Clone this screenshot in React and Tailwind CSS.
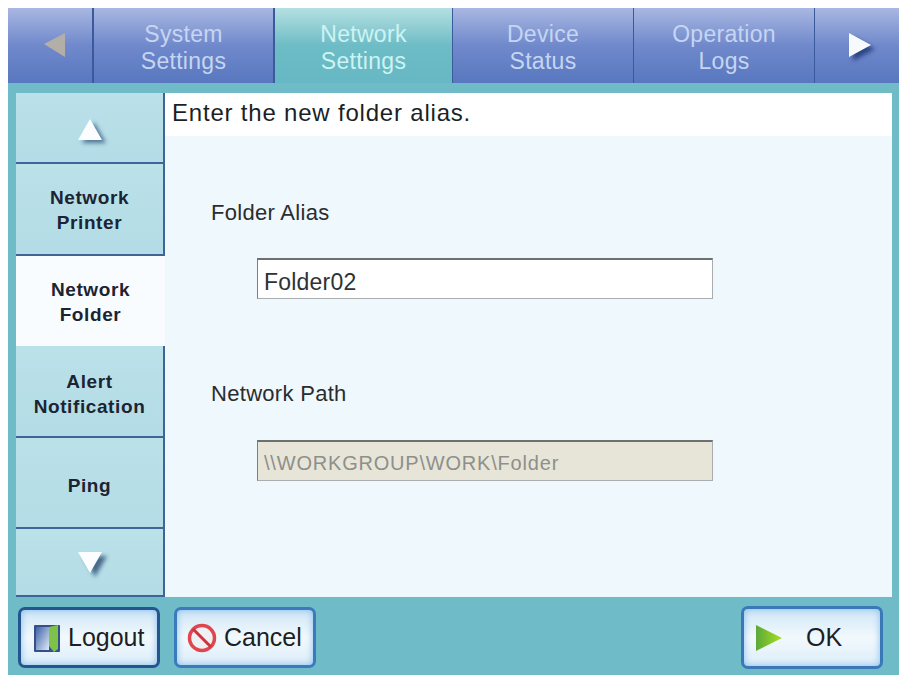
const font = { sans: 'font-["Liberation_Sans",Arial,sans-serif]' }

function Tab({ children, active }) {
  return (
    <div
      className={
        'flex flex-col items-center justify-center text-[23px] leading-[27px] tracking-[0.3px] pt-[4px] ' +
        (active
          ? 'bg-gradient-to-b from-[#b4e0e2] via-[#6dbcc6] to-[#66b8c4] text-[#cdf3f3]'
          : 'bg-gradient-to-b from-[#a9b7e2] via-[#7089cb] to-[#5877bf] text-[#c6d5f2]')
      }
    >
      {children}
    </div>
  )
}

function SideItem({ children, active, h }) {
  return (
    <div
      className={
        'flex flex-col items-center justify-center font-bold text-[19px] tracking-[0.6px] leading-[25px] text-[#1c2433] border-[#3f6596] ' +
        h +
        (active ? ' bg-[#f8fcfe]' : ' bg-gradient-to-b from-[#bbe1e9] to-[#b3dce6] border-b-2 border-r-2')
      }
    >
      {children}
    </div>
  )
}

function Btn({ children, className }) {
  return (
    <div
      className={
        'flex items-center rounded-[7px] border-[3px] bg-gradient-to-b from-[#cfe6f6] via-[#f2f9fd] to-[#dcedf9] shadow-[inset_0_0_7px_#86bdea] text-[25px] text-[#1c1f24] ' +
        className
      }
    >
      {children}
    </div>
  )
}

export default function App() {
  return (
    <div className={'w-[901px] h-[676px] bg-white pt-2 pl-2 overflow-hidden ' + font.sans}>
      <div className="w-[891px] h-[667px] bg-[#6fbbc7] flex flex-col">
        <div className="grid grid-cols-[84px_2px_179px_2px_177px_1px_180px_1px_180px_1px_84px] h-[75px] bg-[#3a5a9c]">
          <Tab>
            <svg width="26" height="26" viewBox="0 0 26 26" className="blur-[0.6px] mb-[6px] ml-[10px]">
              <path d="M23 1 L23 25 L2 12 Z" fill="#b3aea8" />
            </svg>
          </Tab>
          <div />
          <Tab>
            <span>System</span>
            <span>Settings</span>
          </Tab>
          <div />
          <Tab active>
            <span>Network</span>
            <span>Settings</span>
          </Tab>
          <div />
          <Tab>
            <span>Device</span>
            <span>Status</span>
          </Tab>
          <div />
          <Tab>
            <span>Operation</span>
            <span>Logs</span>
          </Tab>
          <div />
          <Tab>
            <svg width="24" height="26" viewBox="0 0 24 26" className="drop-shadow-[4px_4px_2px_#2c4585] mb-[6px] ml-[5px]">
              <path d="M1 1 L1 25 L23 13 Z" fill="#f6fafd" />
            </svg>
          </Tab>
        </div>
        <div className="h-[10px] shrink-0" />
        <div className="flex h-[504px] pl-2 pr-[7px]">
          <div className="w-[149px] flex flex-col shrink-0">
            <SideItem h="h-[71px]">
              <svg width="26" height="24" viewBox="0 0 26 24" className="mt-[4px] drop-shadow-[4px_3px_2px_#4f7596]">
                <path d="M1 22 L13 1 L25 22 Z" fill="#fbfdfe" />
              </svg>
            </SideItem>
            <SideItem h="h-[92px] pt-[2px]">
              <span>Network</span>
              <span>Printer</span>
            </SideItem>
            <SideItem h="h-[90px] pt-[2px]" active>
              <span>Network</span>
              <span>Folder</span>
            </SideItem>
            <SideItem h="h-[92px] pt-[5px]">
              <span>Alert</span>
              <span>Notification</span>
            </SideItem>
            <SideItem h="h-[91px] pt-[6px]">
              <span>Ping</span>
            </SideItem>
            <SideItem h="h-[68px]">
              <svg width="26" height="24" viewBox="0 0 26 24" className="drop-shadow-[5px_4px_2px_#47698a]">
                <path d="M1 2 L25 2 L13 23 Z" fill="#fbfdfe" />
              </svg>
            </SideItem>
          </div>
          <div className="flex-1 bg-[#eff8fc] min-w-0">
            <div className="h-[43px] bg-white pl-[7px] pt-[4px] text-[24px] leading-[32px] text-[#1c1f24] tracking-[0.8px]">
              Enter the new folder alias.
            </div>
            <div className="pl-[46px]">
              <div className="mt-[64px] text-[22px] tracking-[0.3px] leading-[26px] text-[#2a2d30]">Folder Alias</div>
              <div className="ml-[46px] mt-[32px] w-[456px] h-[41px] bg-white border-t-2 border-l border-b border-r border-t-[#6c706e] border-l-[#7a7e7c] border-b-[#a9adad] border-r-[#a9adad] pl-[6px] pt-[3px] text-[23px] tracking-[0.2px] leading-[39px] text-[#2f3235]">
                Folder02
              </div>
              <div className="mt-[82px] text-[22px] tracking-[0.3px] leading-[26px] text-[#2a2d30]">Network Path</div>
              <div className="ml-[46px] mt-[33px] w-[456px] h-[41px] bg-[#e7e5d8] border-t-2 border-l border-b border-r border-t-[#6c706e] border-l-[#7a7e7c] border-b-[#a9adad] border-r-[#a9adad] pl-[6px] pt-[1px] text-[20px] tracking-[0.8px] leading-[40px] text-[#8e8f8a]">
                {'\\\\WORKGROUP\\WORK\\Folder'}
              </div>
            </div>
          </div>
        </div>
        <div className="relative flex-1 flex items-start pl-[10px] pr-4 pt-[10px]">
          <Btn className="w-[142px] h-[61px] pl-[11px] border-[#24558f]">
            <svg width="30" height="32" viewBox="0 0 30 32" className="mr-[6px] shrink-0">
              <defs>
                <linearGradient id="lg" x1="0" y1="0" x2="1" y2="1">
                  <stop offset="0" stopColor="#3f63a8" />
                  <stop offset="1" stopColor="#dfe9f6" />
                </linearGradient>
              </defs>
              <rect x="2" y="3" width="26" height="27" rx="1" fill="#34508a" />
              <rect x="4" y="5" width="13" height="23" fill="url(#lg)" />
              <path d="M17 5 L26 3 L26 27 L22 30 L17 24 Z" fill="#7fc24a" />
            </svg>
            Logout
          </Btn>
          <Btn className="w-[142px] h-[61px] ml-[14px] pl-[9px] border-[#3a7abd]">
            <svg width="32" height="32" viewBox="0 0 32 32" className="mr-[6px] shrink-0">
              <circle cx="16" cy="16" r="12.5" fill="#eef0f4" stroke="#e0464e" strokeWidth="3.5" />
              <path d="M7 7 L25 25" stroke="#cf343c" strokeWidth="3" />
            </svg>
            Cancel
          </Btn>
          <Btn className="w-[142px] h-[63px] ml-auto -mt-px pl-[11px] gap-[23px] border-[#3a78b8]">
            <svg width="28" height="28" viewBox="0 0 28 28" className="shrink-0">
              <defs>
                <linearGradient id="okg" x1="0" y1="0" x2="1" y2="0">
                  <stop offset="0" stopColor="#5aa83a" />
                  <stop offset="1" stopColor="#a8e01e" />
                </linearGradient>
              </defs>
              <path d="M1 1 L27 14 L1 27 Z" fill="url(#okg)" />
            </svg>
            OK
          </Btn>
        </div>
      </div>
    </div>
  )
}
